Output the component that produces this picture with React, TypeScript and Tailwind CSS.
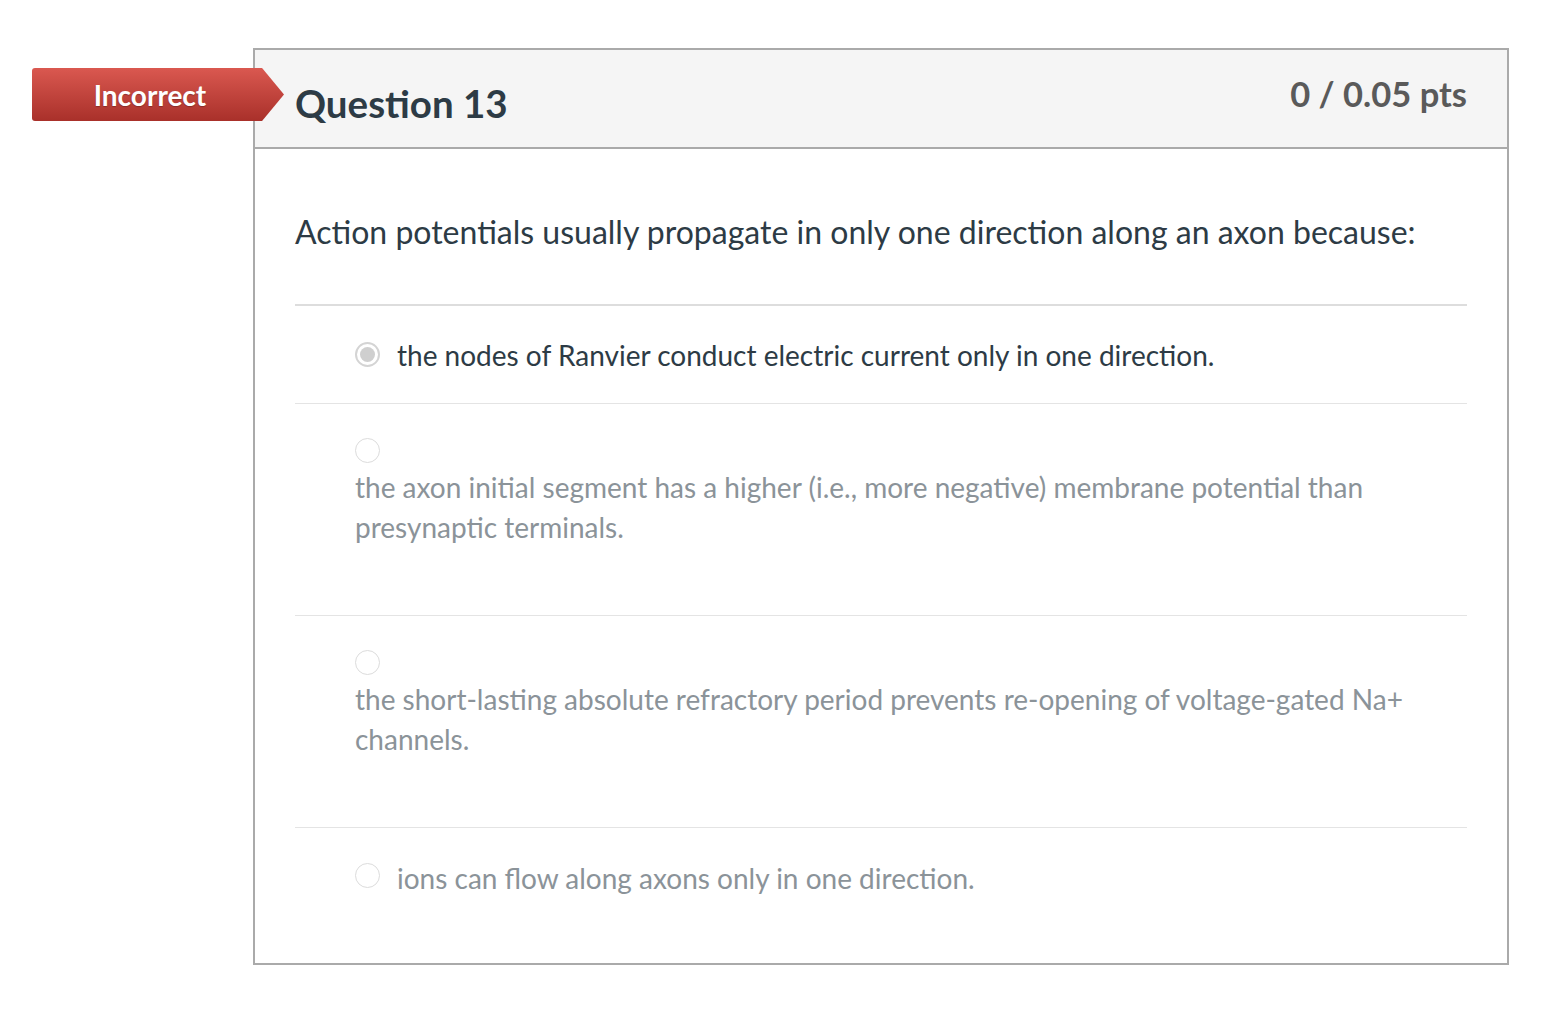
import React from "react";

function Radio({ selected }: { selected?: boolean }) {
  if (selected) {
    return (
      <span className="inline-flex h-[25px] w-[25px] shrink-0 items-center justify-center rounded-full border-2 border-[#d4d4d4] bg-white">
        <span className="h-[15px] w-[15px] rounded-full bg-[#cfcfcf]" />
      </span>
    );
  }
  return <span className="inline-block h-[25px] w-[25px] shrink-0 rounded-full border border-[#dcdcdc] bg-white" />;
}

export default function App() {
  return (
    <div className="min-h-[1018px] w-full bg-white pt-[48px] pl-[253px]" style={{ fontFamily: "Lato, 'Open Sans', sans-serif" }}>
      <div className="relative w-[1256px] border-2 border-[#aaaaaa]">
        <div className="absolute left-[-223px] top-[18px] z-10 flex h-[53px] w-[252px] items-center rounded-l-[3px] bg-gradient-to-b from-[#da5850] to-[#a9302a] [clip-path:polygon(0_0,91.3%_0,100%_50%,91.3%_100%,0_100%)]">
          <span className="w-[230px] pl-[6px] text-center text-[28px] font-bold text-white [text-shadow:0_1px_1px_rgba(0,0,0,0.25)]">
            Incorrect
          </span>
        </div>
        <div className="flex h-[99px] items-start justify-between border-b-2 border-[#aaaaaa] bg-[#f5f5f5] px-[40px]">
          <h2 className="pt-[29px] text-[38.5px] font-bold leading-[48px] text-[#2d3b45]">Question 13</h2>
          <div className="pt-[24px] text-[34.5px] font-bold leading-[40px] text-[#5a5a5a]">0 / 0.05 pts</div>
        </div>
        <div className="px-[40px]">
          <p className="pt-[63px] pb-[52px] text-[32px] leading-[40px] text-[#2d3b45]">
            Action potentials usually propagate in only one direction along an axon because:
          </p>
          <div className="border-t-2 border-[#dddddd]">
            <div className="flex h-[97px] items-center gap-[17px] pl-[60px]">
              <Radio selected />
              <span className="text-[28px] leading-[40px] text-[#2d3b45]">
                the nodes of Ranvier conduct electric current only in one direction.
              </span>
            </div>
            <div className="h-[212px] border-t border-[#e4e4e4] pl-[60px] pt-[34px]">
              <Radio />
              <p className="mt-[-2px] pr-[60px] text-[28px] leading-[40px] text-[#8b9399]">
                the axon initial segment has a higher (i.e., more negative) membrane potential than presynaptic terminals.
              </p>
            </div>
            <div className="h-[212px] border-t border-[#e4e4e4] pl-[60px] pt-[34px]">
              <Radio />
              <p className="mt-[-2px] pr-[60px] text-[28px] leading-[40px] text-[#8b9399]">
                the short-lasting absolute refractory period prevents re-opening of voltage-gated Na+ channels.
              </p>
            </div>
            <div className="flex h-[136px] items-start gap-[17px] border-t border-[#e4e4e4] pl-[60px] pt-[30px]">
              <span className="mt-[5px]">
                <Radio />
              </span>
              <span className="text-[28px] leading-[40px] text-[#8b9399]">ions can flow along axons only in one direction.</span>
            </div>
          </div>
        </div>
      </div>
    </div>
  );
}
